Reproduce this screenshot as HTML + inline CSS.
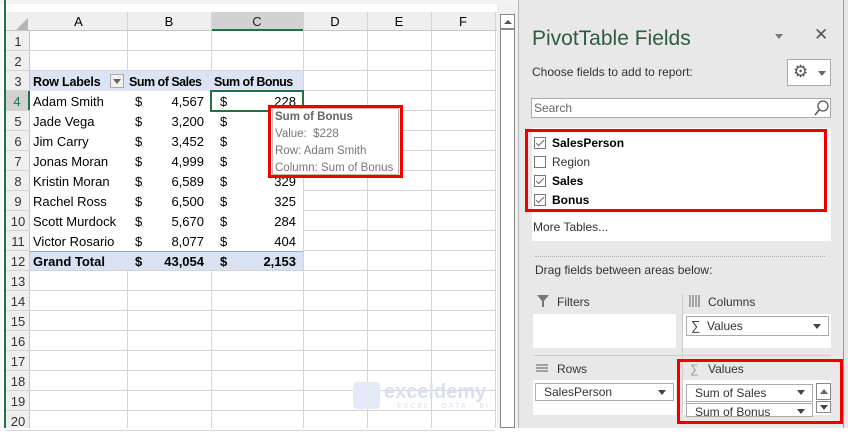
<!DOCTYPE html>
<html><head><style>
*{margin:0;padding:0;box-sizing:border-box}
body{width:848px;height:428px;overflow:hidden;background:#fff;font-family:"Liberation Sans",sans-serif;font-size:13px;color:#000;position:relative}
.a{position:absolute}
.hd{background:#efefef;color:#333;text-align:center;font-size:13px}
.vl{position:absolute;width:1px;background:#d4d4d4}
.hl{position:absolute;height:1px;background:#d4d4d4}
.t{position:absolute;white-space:nowrap;font-size:13px;line-height:20px}
.r{text-align:right}
.dd{position:absolute;background:#fff;border:1px solid #ababab;font-size:12px;line-height:16px;padding-left:8px;color:#333}
.tri{position:absolute;width:0;height:0;border-left:4px solid transparent;border-right:4px solid transparent;border-top:5px solid #444}
.cb{position:absolute;width:12px;height:12px;border:1px solid #777;background:#fff}
.cb.k::after{content:"";position:absolute;left:3px;top:0px;width:3px;height:7px;border:solid #666;border-width:0 1px 1px 0;transform:rotate(45deg)}
</style></head><body>
<div class="a" style="left:0;top:0;width:848px;height:4px;background:#f3f3f3"></div>
<div class="a" style="left:4px;top:0;width:2px;height:428px;background:#217346"></div>
<div class="a hd" style="left:6px;top:12px;width:491px;height:19px;border-bottom:1px solid #c6c6c6"></div>
<div class="a hd" style="left:6px;top:31px;width:24px;height:397px;border-right:1px solid #c6c6c6"></div>
<div class="a" style="left:16px;top:18px;width:0;height:0;border-left:12px solid transparent;border-bottom:12px solid #b5b5b5"></div>
<div class="a" style="left:211px;top:12px;width:92px;height:19px;background:#d2d2d2;border-bottom:2px solid #217346"></div>
<div class="t" style="left:30px;top:12px;width:97px;text-align:center;line-height:19px">A</div>
<div class="t" style="left:127px;top:12px;width:84px;text-align:center;line-height:19px">B</div>
<div class="t" style="left:211px;top:12px;width:92px;text-align:center;line-height:19px;color:#222">C</div>
<div class="t" style="left:303px;top:12px;width:64px;text-align:center;line-height:19px">D</div>
<div class="t" style="left:367px;top:12px;width:64px;text-align:center;line-height:19px">E</div>
<div class="t" style="left:431px;top:12px;width:64px;text-align:center;line-height:19px">F</div>
<div class="vl" style="left:127px;top:12px;height:416px"></div>
<div class="vl" style="left:211px;top:12px;height:416px"></div>
<div class="vl" style="left:303px;top:12px;height:416px"></div>
<div class="vl" style="left:367px;top:12px;height:416px"></div>
<div class="vl" style="left:431px;top:12px;height:416px"></div>
<div class="vl" style="left:495px;top:12px;height:416px"></div>
<div class="a" style="left:30px;top:251px;width:273px;height:20px;background:#d9e1f2;border-top:1px solid #8ea9db"></div>
<div id="rows"></div>
<script>
var h='';
for(var i=1;i<=20;i++){var y=31+(i-1)*20;
h+='<div class="hl" style="left:6px;top:'+(y+19)+'px;width:489px"></div>';
h+='<div class="t" style="left:6px;top:'+(y+1)+'px;width:24px;text-align:center;color:'+(i==4?'#217346':'#333')+'">'+i+'</div>';}
document.getElementById('rows').outerHTML=h;
</script>
<div class="a" style="left:30px;top:91px;width:273px;height:160px;background:#fff"></div>
<div class="a" style="left:30px;top:71px;width:273px;height:20px;background:#dce3f3"></div>
<div class="a" style="left:6px;top:91px;width:24px;height:19px;background:#d2d2d2;border-right:2px solid #217346;color:#217346;text-align:center;line-height:21px">4</div>
<div class="t" style="left:33px;top:72px;font-weight:bold;font-size:12.5px;letter-spacing:-0.2px">Row Labels</div>
<div class="a" style="left:110px;top:74px;width:14px;height:14px;border:1px solid #aaa;background:#f2f2f2"><div class="tri" style="left:2px;top:4px;border-top-color:#666"></div></div>
<div class="t" style="left:129px;top:72px;font-weight:bold;font-size:12.5px;letter-spacing:-0.5px">Sum of Sales</div>
<div class="t" style="left:214px;top:72px;font-weight:bold;font-size:12.5px;letter-spacing:-0.5px">Sum of Bonus</div>
<div id="data"></div>
<script>
var d=[["Adam Smith","4,567","228"],["Jade Vega","3,200",""],["Jim Carry","3,452",""],["Jonas Moran","4,999",""],["Kristin Moran","6,589","329"],["Rachel Ross","6,500","325"],["Scott Murdock","5,670","284"],["Victor Rosario","8,077","404"],["Grand Total","43,054","2,153"]];
var s='';
for(var i=0;i<9;i++){var y=92+i*20;var b=i==8?'font-weight:bold;':'';
s+='<div class="t" style="'+b+'left:33px;top:'+y+'px">'+d[i][0]+'</div>';
s+='<div class="t" style="'+b+'left:135px;top:'+y+'px">$</div>';
s+='<div class="t r" style="'+b+'left:150px;top:'+y+'px;width:54px">'+d[i][1]+'</div>';
s+='<div class="t" style="'+b+'left:220px;top:'+y+'px">$</div>';
s+='<div class="t r" style="'+b+'left:240px;top:'+y+'px;width:56px">'+d[i][2]+'</div>';}
document.getElementById('data').outerHTML=s;
</script>
<div class="a" style="left:210px;top:90px;width:94px;height:22px;border:2px solid #217346"></div>
<div class="a" style="left:268px;top:105px;width:135px;height:73px;border:3px solid #e00;background:#fff"></div>
<div class="a" style="left:272px;top:108px;width:127px;height:67px;border:1px solid #bbb;background:#fff;font-size:11.5px;color:#777;line-height:17px;padding-left:2px;white-space:nowrap"><b style="color:#666">Sum of Bonus</b><br>Value:&nbsp; $228<br>Row: Adam Smith<br>Column: Sum of Bonus</div>
<div class="a" style="left:353px;top:382px;width:27px;height:27px;background:#e3e9f7;border-radius:4px"></div>
<div class="t" style="left:384px;top:380px;font-size:20px;color:#d8dff0;font-weight:bold;line-height:24px">exceldemy</div>
<div class="t" style="left:397px;top:402px;font-size:7px;color:#dde;letter-spacing:2px;line-height:9px">EXCEL · DATA · BI</div>
<div class="a" style="left:497px;top:4px;width:21px;height:424px;background:#f0f0f0"></div>
<div class="a" style="left:500px;top:14px;width:15px;height:414px;border:1px solid #888;background:#fff"></div>
<div class="a" style="left:500px;top:14px;width:15px;height:16px;border-bottom:2px solid #888"></div>
<div class="tri" style="left:504px;top:20px;border-top:0;border-bottom:4px solid #555"></div>
<div class="a" style="left:518px;top:0;width:330px;height:428px;background:#e8e8e8;border-left:1px solid #b8b8b8"></div>
<div class="a" style="left:843px;top:0;width:5px;height:428px;background:#e8e8e8;border-left:1px solid #999"></div>
<div class="t" style="left:532px;top:26px;font-size:21px;line-height:26px;color:#2f5b44">PivotTable Fields</div>
<div class="tri" style="left:775px;top:34px;border-top-color:#777"></div>
<div class="t" style="left:814px;top:25px;font-size:17px;color:#555">✕</div>
<div class="t" style="left:532px;top:62px;font-size:12px;color:#333">Choose fields to add to report:</div>
<div class="a" style="left:787px;top:59px;width:44px;height:27px;border:1px solid #aaa;background:#fff"></div>
<div class="t" style="left:793px;top:61px;font-size:17px;color:#555;line-height:22px">⚙</div>
<div class="tri" style="left:818px;top:71px;border-top-color:#666"></div>
<div class="a" style="left:531px;top:98px;width:300px;height:20px;border:1px solid #aaa;background:#fff;font-size:12px;color:#666;line-height:18px;padding-left:2px">Search</div>
<svg class="a" style="left:813px;top:99px" width="18" height="18"><circle cx="10" cy="7" r="5" fill="none" stroke="#555" stroke-width="1.3"/><line x1="6.5" y1="10.5" x2="2" y2="16" stroke="#555" stroke-width="1.5"/></svg>
<div class="a" style="left:532px;top:128px;width:299px;height:113px;background:#fff"></div>
<div class="a" style="left:525px;top:129px;width:302px;height:83px;border:3px solid #e00"></div>
<div class="cb k" style="left:534px;top:137px"></div><div class="t" style="left:552px;top:133px;font-weight:bold;font-size:12px">SalesPerson</div>
<div class="cb" style="left:534px;top:156px"></div><div class="t" style="left:552px;top:152px;font-size:12px;color:#333">Region</div>
<div class="cb k" style="left:534px;top:175px"></div><div class="t" style="left:552px;top:171px;font-weight:bold;font-size:12px">Sales</div>
<div class="cb k" style="left:534px;top:194px"></div><div class="t" style="left:552px;top:190px;font-weight:bold;font-size:12px">Bonus</div>
<div class="t" style="left:533px;top:217px;font-size:12px;color:#333">More Tables...</div>
<div class="a" style="left:535px;top:256px;width:290px;border-top:1px dotted #aaa"></div>
<div class="t" style="left:535px;top:260px;font-size:12px;color:#333">Drag fields between areas below:</div>
<svg class="a" style="left:537px;top:295px" width="12" height="12"><path d="M0 0H12L7 6V12H5V6Z" fill="#777"/></svg>
<div class="t" style="left:557px;top:292px;font-size:12px;color:#333">Filters</div>
<div class="a" style="left:533px;top:314px;width:143px;height:34px;background:#fff"></div>
<div class="a" style="left:682px;top:294px;width:1px;height:120px;background:#ccc"></div>
<div class="a" style="left:533px;top:355px;width:298px;height:1px;background:#ccc"></div>
<svg class="a" style="left:689px;top:295px" width="12" height="12"><path d="M1 0V12M4 0V12M7 0V12M10 0V12" stroke="#777" stroke-width="1.2"/></svg>
<div class="t" style="left:708px;top:292px;font-size:12px;color:#333">Columns</div>
<div class="a" style="left:683px;top:314px;width:148px;height:34px;background:#fff"></div>
<div class="dd" style="left:686px;top:316px;width:143px;height:20px;padding-left:20px;line-height:18px">Values</div>
<div class="t" style="left:691px;top:316px;font-size:13px;color:#444;line-height:20px">∑</div>
<div class="tri" style="left:813px;top:324px"></div>
<svg class="a" style="left:536px;top:364px" width="12" height="10"><path d="M0 1H12M0 4H12M0 7H12" stroke="#777" stroke-width="1.2"/></svg>
<div class="t" style="left:557px;top:359px;font-size:12px;color:#333">Rows</div>
<div class="a" style="left:533px;top:380px;width:143px;height:35px;background:#fff"></div>
<div class="dd" style="left:535px;top:383px;width:139px;height:18px">SalesPerson</div>
<div class="tri" style="left:658px;top:390px"></div>
<div class="a" style="left:683px;top:380px;width:148px;height:35px;background:#fff"></div>
<div class="t" style="left:690px;top:359px;font-size:12px;color:#999">∑</div>
<div class="t" style="left:708px;top:359px;font-size:12px;color:#333">Values</div>
<div class="dd" style="left:686px;top:384px;width:127px;height:18px">Sum of Sales</div>
<div class="tri" style="left:797px;top:390px"></div>
<div class="dd" style="left:686px;top:403px;width:127px;height:14px;overflow:hidden">Sum of Bonus</div>
<div class="tri" style="left:797px;top:409px"></div>
<div class="a" style="left:816px;top:383px;width:15px;height:17px;border:1px solid #888;background:#fff"></div>
<div class="tri" style="left:820px;top:389px;border-top:0;border-bottom:5px solid #666"></div>
<div class="a" style="left:816px;top:401px;width:15px;height:12px;border:1px solid #888;background:#fff"></div>
<div class="tri" style="left:820px;top:405px"></div>
<div class="a" style="left:677px;top:359px;width:166px;height:65px;border:3px solid #e00"></div>
</body></html>
